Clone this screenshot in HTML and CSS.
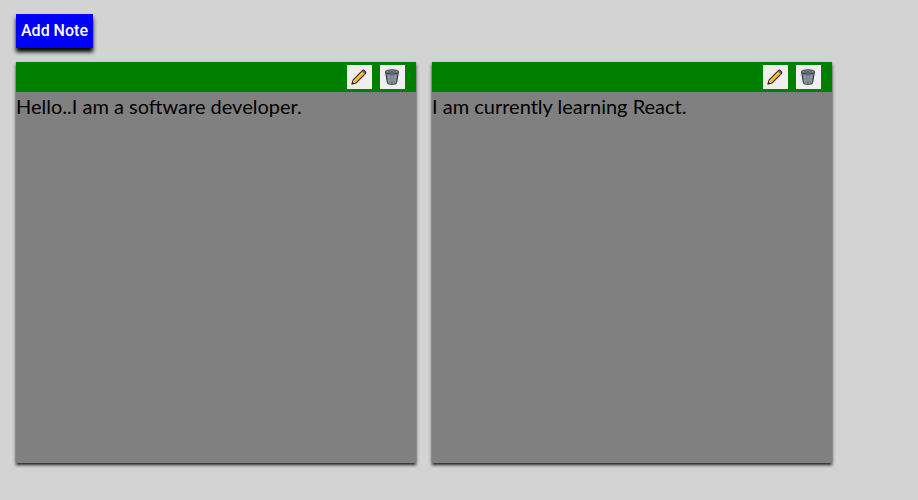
FILE: index.html
```html
<!DOCTYPE html>
<html lang="en">
<head>
<meta charset="utf-8">
<meta name="viewport" content="width=device-width, initial-scale=1">
<title>Notes</title>
<link rel="stylesheet" href="styles.css">
</head>
<body>
<svg class="sprite" aria-hidden="true">
  <symbol id="pencil" viewBox="0 0 16 16">
    <path d="M1 15l1.2-4.2L11.4 1.6c1.2-1.2 4.2 1.6 3 3L5.2 13.8z" fill="#fbb51e" stroke="#332a2a" stroke-width="1.2" stroke-linejoin="round"/>
    <path d="M3.6 11.4l8-8" stroke="#ffd84f" stroke-width="1"/>
    <path d="M1.4 14.6l1-3.2 2.3 2.2z" fill="#f5d9a8"/>
    <path d="M.6 15.4l.8-2.8 2 2z" fill="#222"/>
    <path d="M10.3 3.1l1-1 2.8 2.7-1 1z" fill="#aebbc2"/>
    <path d="M11.2 2.1c1-1.4 3.9 1.3 2.8 2.6z" fill="#ee4455" stroke="#6c2830" stroke-width=".6"/>
  </symbol>
  <symbol id="bin" viewBox="0 0 16 16">
    <path d="M1.6 3.2L3.4 14c.3 1.7 8.9 1.7 9.2 0L14.4 3.2z" fill="#6f7d86" stroke="#30383d" stroke-width="1"/>
    <path d="M4 5l2 10M7 5l3 10M10.5 5l1.2 9M12 5L9.5 15M9 5L6 15M5.6 5l-1.4 8M3 8h10M3.5 11h9" fill="none" stroke="#98a5ad" stroke-width=".5"/>
    <ellipse cx="8" cy="2.9" rx="6.7" ry="2.1" fill="#8d9aa2" stroke="#30383d" stroke-width="1"/>
    <ellipse cx="8" cy="3.1" rx="4.9" ry="1" fill="#59656c"/>
  </symbol>
</svg>
<main class="board">
  <button class="add" type="button">Add Note</button>
  <div class="notes">
    <article class="note">
      <header class="tools">
        <button class="tool" type="button" aria-label="Edit note"><svg class="icon"><use href="#pencil"/></svg></button>
        <button class="tool" type="button" aria-label="Delete note"><svg class="icon"><use href="#bin"/></svg></button>
      </header>
      <p class="text">Hello..I am a software developer.</p>
    </article>
    <article class="note">
      <header class="tools">
        <button class="tool" type="button" aria-label="Edit note"><svg class="icon"><use href="#pencil"/></svg></button>
        <button class="tool" type="button" aria-label="Delete note"><svg class="icon"><use href="#bin"/></svg></button>
      </header>
      <p class="text">I am currently learning React.</p>
    </article>
  </div>
</main>
</body>
</html>
```
FILE: styles.css
```css
* {
  box-sizing: border-box;
}

body {
  margin: 0;
  background: #d3d3d3;
  color: #000;
  font-family: Lato, "Liberation Sans", sans-serif;
}

.sprite {
  position: absolute;
  width: 0;
  height: 0;
}

.board {
  padding: 14px 16px;
}

.add {
  display: block;
  padding: 5px;
  border: 0;
  background: #00f;
  color: #fff;
  font-family: Roboto, "Liberation Sans", sans-serif;
  font-size: 16px;
  font-weight: 500;
  line-height: 24px;
  box-shadow: 0 4px 4px #000;
}

.notes {
  display: flex;
  flex-wrap: wrap;
  gap: 16px;
  margin-top: 14px;
}

.note {
  flex: 0 1 400px;
  min-height: 401px;
  background: #808080;
  box-shadow: 0 2px 3px #201c1c;
}

.tools {
  display: flex;
  justify-content: flex-end;
  gap: 8px;
  padding: 3px 11px;
  background: #008000;
}

.tool {
  display: flex;
  align-items: center;
  width: 25px;
  height: 24px;
  padding: 0 4px;
  border: 0;
  background: #efefef;
}

.icon {
  flex: none;
  width: 16px;
  height: 16px;
}

.text {
  margin: 0;
  font-size: 20px;
  font-weight: 400;
  line-height: 28px;
}
```
